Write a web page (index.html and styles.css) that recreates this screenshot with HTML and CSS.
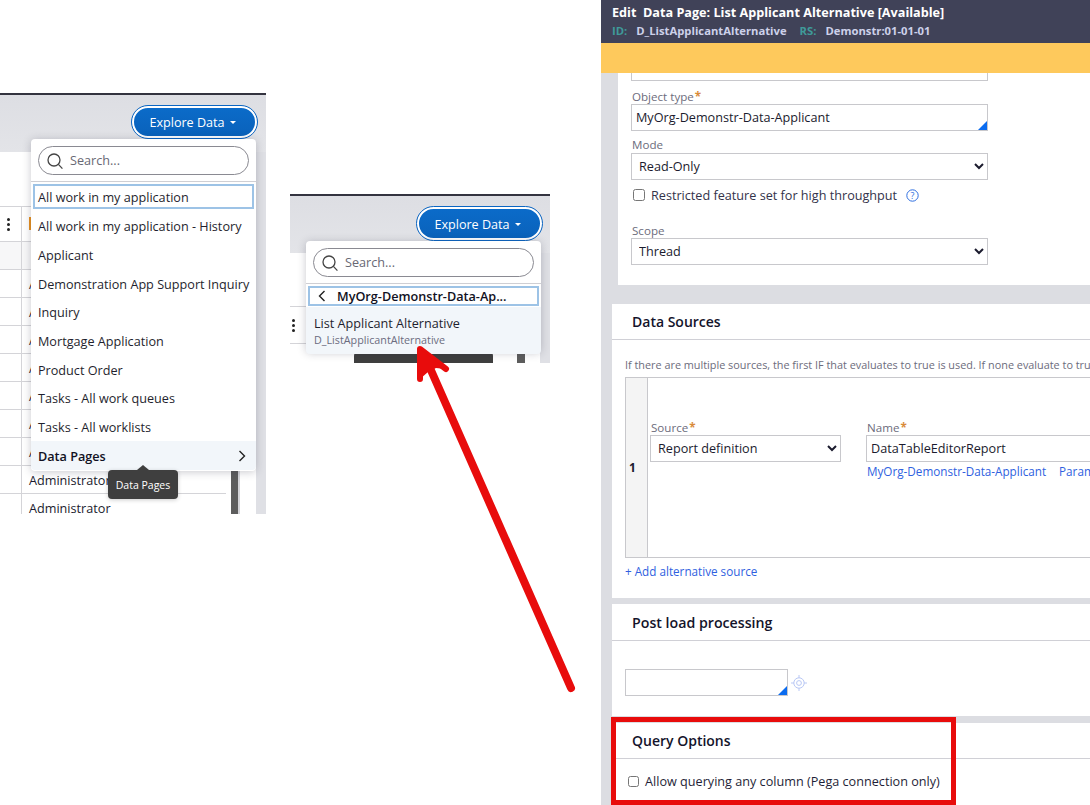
FILE: index.html
```html
<!DOCTYPE html>
<html lang="en">
<head>
<meta charset="utf-8">
<title>Data Page</title>
<link rel="stylesheet" href="styles.css">
</head>
<body>
<section class="shot shot-a">
  <div class="shot-top"></div>
  <div class="shot-table">
    <div class="row row-head"></div>
    <div class="row row-kebab"><span class="kebab"><i></i><i></i><i></i></span><span class="flag"></span></div>
    <div class="row row-band"></div>
    <div class="row"><span class="cell">Administrator</span></div>
    <div class="row"><span class="cell">Administrator</span></div>
    <div class="row"><span class="cell">Administrator</span></div>
    <div class="row"><span class="cell">Administrator</span></div>
    <div class="row"><span class="cell">Administrator</span></div>
    <div class="row"><span class="cell">Administrator</span></div>
    <div class="row"><span class="cell">Administrator</span></div>
    <div class="row"><span class="cell">Administrator</span></div>
    <div class="row"><span class="cell">Administrator</span></div>
  </div>
  <div class="scroll-a"></div>
  <div class="explore"><span>Explore Data</span><b class="caret"></b></div>
  <div class="menu menu-a">
    <div class="search"><svg width="18" height="18" viewBox="0 0 18 18"><circle cx="8" cy="8" r="6" fill="none" stroke="#444" stroke-width="1.3"/><path d="M12.4 12.4 16.4 16.6" stroke="#444" stroke-width="1.3" fill="none"/></svg><span class="search-text">Search...</span></div>
    <div class="menu-rule"></div>
    <div class="item item-focus">All work in my application</div>
    <div class="item">All work in my application - History</div>
    <div class="item">Applicant</div>
    <div class="item">Demonstration App Support Inquiry</div>
    <div class="item">Inquiry</div>
    <div class="item">Mortgage Application</div>
    <div class="item">Product Order</div>
    <div class="item">Tasks - All work queues</div>
    <div class="item">Tasks - All worklists</div>
    <div class="item item-sub"><span>Data Pages</span><svg width="8" height="12" viewBox="0 0 8 12"><path d="M1.5 1 6.5 6 1.5 11" fill="none" stroke="#222" stroke-width="1.4"/></svg></div>
  </div>
  <div class="tip">Data Pages</div>
</section>

<section class="shot shot-b">
  <div class="shot-top"></div>
  <div class="shot-table">
    <div class="row row-head"></div>
    <div class="row row-kebab"><span class="kebab"><i></i><i></i><i></i></span></div>
  </div>
  <div class="scroll-b"></div>
  <div class="explore"><span>Explore Data</span><b class="caret"></b></div>
  <div class="tip-b"></div>
  <div class="menu menu-b">
    <div class="search"><svg width="18" height="18" viewBox="0 0 18 18"><circle cx="8" cy="8" r="6" fill="none" stroke="#444" stroke-width="1.3"/><path d="M12.4 12.4 16.4 16.6" stroke="#444" stroke-width="1.3" fill="none"/></svg><span class="search-text">Search...</span></div>
    <div class="menu-rule"></div>
    <div class="back"><svg width="8" height="12" viewBox="0 0 8 12"><path d="M6.5 1 1.5 6 6.5 11" fill="none" stroke="#222" stroke-width="1.4"/></svg><span>MyOrg-Demonstr-Data-Ap...</span></div>
    <div class="pick"><div class="pick-title">List Applicant Alternative</div><div class="pick-id">D_ListApplicantAlternative</div></div>
  </div>
</section>

<section class="shot-c">
  <header class="rule-head">
    <div class="rule-title">Edit&nbsp; Data Page: List Applicant Alternative <span class="status">[Available]</span></div>
    <div class="rule-meta"><em>ID:</em><span class="id">D_ListApplicantAlternative</span><em>RS:</em><span>Demonstr:01-01-01</span></div>
  </header>
  <div class="banner"></div>
  <div class="card card-first">
    <div class="cut-input"></div>
    <label class="lbl lbl-object">Object type<i class="req">*</i></label>
    <div class="input input-wide">MyOrg-Demonstr-Data-Applicant<b class="corner"></b></div>
    <label class="lbl lbl-mode">Mode</label>
    <select class="sel sel-wide"><option>Read-Only</option></select>
    <div class="check-line"><input type="checkbox" class="chk"><span>Restricted feature set for high throughput</span>
      <svg class="help" width="13" height="13" viewBox="0 0 13 13"><circle cx="6.5" cy="6.5" r="5.7" fill="none" stroke="#2f6fe0"/><text x="6.5" y="9.6" text-anchor="middle" class="help-q">?</text></svg></div>
    <label class="lbl lbl-scope">Scope</label>
    <select class="sel sel-wide"><option>Thread</option></select>
  </div>
  <div class="card card-src">
    <h2 class="card-head">Data Sources</h2>
    <p class="hint">If there are multiple sources, the first IF that evaluates to true is used. If none evaluate to true, the last source is used.</p>
    <div class="src-table">
      <div class="src-num">1</div>
      <div class="src-body">
        <div class="src-field">
          <label class="lbl">Source<i class="req">*</i></label>
          <select class="sel sel-src"><option>Report definition</option></select>
        </div>
        <div class="src-field">
          <label class="lbl">Name<i class="req">*</i></label>
          <div class="input input-name">DataTableEditorReport</div>
          <div class="links"><a>MyOrg-Demonstr-Data-Applicant</a><a>Parameters</a></div>
        </div>
      </div>
    </div>
    <a class="add">+ Add alternative source</a>
  </div>
  <div class="card card-post">
    <h2 class="card-head">Post load processing</h2>
    <div class="post-line">
      <div class="input input-post"><b class="corner"></b></div>
      <svg width="16" height="16" viewBox="0 0 16 16" fill="none" stroke="#b9c8f5"><circle cx="8" cy="8" r="5.2"/><circle cx="8" cy="8" r="2.4"/><path d="M8 0v3M8 13v3M0 8h3M13 8h3"/></svg>
    </div>
  </div>
  <div class="card card-query">
    <h2 class="card-head">Query Options</h2>
    <div class="query-line"><input type="checkbox" class="chk"><span>Allow querying any column (Pega connection only)</span></div>
  </div>
</section>

<div class="red-box"></div>
<svg class="arrow" width="1090" height="805" viewBox="0 0 1090 805"><path d="M571 688 430 368" fill="none" stroke="#e80c0c" stroke-width="8" stroke-linecap="round"/><path d="M420 379 420 349 446 369" fill="none" stroke="#e80c0c" stroke-width="6" stroke-linecap="round" stroke-linejoin="round"/><path d="M420 349 420 379 428 372 436 368 446 369Z" fill="#e80c0c"/></svg>
</body>
</html>
```
FILE: styles.css
```css
* { box-sizing: border-box; }
html, body { margin: 0; height: 100%; }
body { position: relative; width: 1090px; height: 805px; overflow: hidden; background: #fff; font-family: "Open Sans", "Liberation Sans", sans-serif; font-size: 12.65px; color: #1b1b2e; }
.shot { position: absolute; overflow: hidden; background: #dfe0e5; display: flex; flex-direction: column; }
.shot-a { left: 0; top: 93px; width: 266px; height: 421px; }
.shot-b { left: 290px; top: 194px; width: 260px; height: 169px; }
.shot-top { flex: none; height: 59px; border-top: 2px solid #33333f; background: linear-gradient(#dddee3, #e3e4e8); }
.shot-table { flex: 1; background: #fff; margin-right: 10px; }
.row { position: relative; height: 28px; border-bottom: 1px solid #d4d4d8; padding-left: 21px; }
.shot-a .row { margin-right: 30px; }
.row::before { content: ""; position: absolute; left: 21px; top: 0; bottom: 0; border-left: 1px solid #d4d4d8; }
.row-head { height: 55px; }
.row-head::before { display: none; }
.shot-b .row-head { height: 54px; }
.row-kebab { height: 35px; }
.shot-b .row-kebab { height: 37px; }
.row-band { height: 28px; background: #f7f7f8; }
.cell { display: block; padding-left: 8px; line-height: 29px; white-space: nowrap; color: #1b1b2e; }
.kebab { position: absolute; left: 6.5px; top: 11px; display: flex; flex-direction: column; gap: 2px; }
.shot-b .kebab { left: 1.5px; top: 12px; }
.kebab i { width: 3px; height: 3px; background: #222; border-radius: 50%; }
.flag { position: absolute; left: 29px; top: 10px; width: 4px; height: 13px; background: #e8911f; }
.scroll-a { position: absolute; left: 231px; top: 340px; width: 9px; height: 81px; background: #5d5d5d; border-right: 2px solid #d4d4d8; }
.scroll-b { position: absolute; left: 227px; top: 60px; width: 8px; height: 109px; background: #5d5d5d; }
.explore { position: absolute; right: 8px; top: 13px; width: 125px; height: 33px; padding: 1px 4px 0 0; border-radius: 17px; background: linear-gradient(#0b6bc9, #0a62bb); border: 2px solid #fff; outline: 1px solid #0b66c3; color: #fff; display: flex; align-items: center; justify-content: center; gap: 5px; font-size: 12.6px; }
.shot-a .explore { right: 9px; height: 32px; padding-top: 0; }
.caret { width: 0; height: 0; border: 3px solid transparent; border-top: 3.5px solid #fff; border-bottom: 0; }
.menu { position: absolute; background: #fff; border-radius: 4px; box-shadow: 0 1px 8px rgba(40, 40, 60, .25); display: flex; flex-direction: column; }
.menu-a { left: 31px; top: 46px; width: 225px; height: 332px; }
.menu-b { left: 16px; top: 47px; width: 235px; height: 111px; }
.search { flex: none; margin: 7px 7px 0; height: 29px; border: 1px solid #8a8a92; border-radius: 15px; display: flex; align-items: center; gap: 6px; padding-left: 7px; color: #686874; }
.search-text { padding-bottom: 2px; }
.menu-rule { flex: none; margin-top: 6px; border-top: 1px solid #cfcfd4; height: 3px; }
.item { height: 28.7px; flex: none; display: flex; align-items: center; justify-content: space-between; padding: 0 10px 0 7px; white-space: nowrap; color: #1f1f2e; }
.item-focus { height: 25px; margin: 0 2px 2.8px; padding-left: 3px; border: 2px solid #9dc3e6; }
.item-sub { background: #f2f6fa; font-weight: 600; height: 29.2px; border-radius: 0 0 4px 4px; color: #111122; }
.tip { position: absolute; left: 108px; top: 377px; width: 70px; height: 29px; background: #3f3f3f; border-radius: 4px; color: #fff; font-size: 10.5px; display: flex; align-items: center; justify-content: center; box-shadow: 0 1px 4px rgba(0, 0, 0, .2); }
.tip::before { content: ""; position: absolute; left: 29px; top: -5px; border: 6px solid transparent; border-top: 0; border-bottom: 5px solid #3f3f3f; }
.tip-b { position: absolute; left: 64px; top: 158px; width: 139px; height: 11px; background: #3f3f3f; border-radius: 4px 4px 0 0; }
.back { flex: none; height: 20px; margin: 0 2px; border: 2px solid #9dc3e6; display: flex; align-items: center; gap: 11px; padding-left: 8px; font-weight: 600; white-space: nowrap; color: #111122; }
.pick { flex: 1; margin-top: 1px; background: #f2f6fa; border-radius: 0 0 4px 4px; padding: 7px 8px; }
.pick-title { line-height: 19px; color: #1f1f2e; }
.pick-id { font-size: 10.75px; line-height: 14px; color: #6c6c80; }

.shot-c { position: absolute; left: 601px; top: 0; width: 489px; height: 805px; overflow: hidden; background: #dcdde2; display: flex; flex-direction: column; }
.rule-head { flex: none; height: 43px; background: #404258; color: #fff; padding: 4px 0 0 11px; font-weight: 700; font-size: 12.65px; }
.rule-title { line-height: 17px; white-space: nowrap; }
.status { font-size: 12.65px; }
.rule-meta { font-size: 11.25px; line-height: 17px; margin-top: 1px; color: #cdd1ea; display: flex; white-space: nowrap; }
.rule-meta em { font-style: normal; color: #3f9a9a; margin-right: 9px; }
.rule-meta .id { margin-right: 13px; }
.banner { flex: none; height: 30px; background: #fec95c; }
.card { flex: none; background: #fff; }
.card-first { height: 212px; margin-left: 17px; padding-left: 13px; }
.cut-input { width: 357px; height: 8px; border: 1px solid #c8c8cc; border-top: 0; }
.lbl { display: block; color: #6c6c7c; font-size: 11.6px; line-height: 16px; white-space: nowrap; padding-left: 1px; }
.req { color: #d98b3a; font-style: normal; margin-left: 1px; font-weight: 700; }
.lbl-object { margin-top: 7px; height: 16px; line-height: 18px; }
.lbl-mode { margin-top: 6px; }
.lbl-scope { margin-top: 19px; height: 15px; line-height: 15px; }
.input { position: relative; height: 27px; border: 1px solid #c8c8cc; background: #fff; padding-left: 4px; line-height: 25px; white-space: nowrap; color: #1b1b2e; }
.input-wide { width: 357px; }
.corner { position: absolute; right: 0; bottom: 0; width: 0; height: 0; border-left: 9px solid transparent; border-bottom: 9px solid #0b6cf0; }
.sel { height: 27px; border: 1px solid #c8c8cc; background: #fff; font: inherit; color: #1b1b2e; padding: 0 0 2px 3px; border-radius: 0; display: block; }
.sel-wide { width: 357px; }
.sel-src { width: 191px; }
.check-line { display: flex; align-items: center; margin-top: 6px; height: 18px; padding-left: 2px; color: #33334a; white-space: nowrap; }
.chk { width: 12px; height: 12px; margin: 0 6px 0 0; flex: none; }
.help { margin-left: 9px; }
.help-q { font-size: 9px; fill: #2f6fe0; }
.card-src { margin-top: 19px; margin-left: 11px; height: 294px; }
.card-head { margin: 0; height: 36px; border-bottom: 1px solid #d0d0d6; padding-left: 20px; font-size: 14px; font-weight: 600; line-height: 35px; color: #14142b; white-space: nowrap; }
.hint { margin: 17px 0 4px 13px; font-size: 10.85px; line-height: 16px; white-space: nowrap; color: #6c6c7c; }
.src-table { display: flex; margin-left: 13px; height: 181px; width: 600px; border: 1px solid #c8c8cc; }
.src-num { flex: none; width: 22px; background: #f4f4f4; border-right: 1px solid #c8c8cc; display: flex; align-items: center; padding-left: 3px; font-weight: 700; font-size: 12px; }
.src-body { display: flex; gap: 25px; padding: 41px 0 0 2px; }
.src-field .lbl { height: 16px; line-height: 18px; }
.input-name { width: 400px; padding-left: 4px; }
.links { display: flex; gap: 13px; font-size: 11.7px; line-height: 18px; padding-left: 1px; color: #2f5fe0; white-space: nowrap; }
.add { display: block; margin: 5px 0 0 13px; font-size: 11.7px; color: #2f5fe0; line-height: 16px; }
.card-post { margin-top: 6px; margin-left: 11px; height: 112px; }
.card-post .card-head { height: 37px; line-height: 37px; font-size: 14.2px; }
.post-line { display: flex; align-items: center; gap: 3px; margin: 28px 0 0 13px; }
.input-post { width: 163px; }
.card-query { margin-top: 7px; margin-left: 15px; flex: 1; }
.card-query .card-head { padding-left: 16px; }
.query-line { display: flex; align-items: center; margin: 13px 0 0 12px; height: 18px; color: #1f1f38; white-space: nowrap; }
.query-line .chk { width: 11px; height: 11px; margin-right: 6px; }
.red-box { position: absolute; left: 611px; top: 717px; width: 345px; height: 88px; border: 5px solid #e80c0c; }
.arrow { position: absolute; left: 0; top: 0; pointer-events: none; }
```
